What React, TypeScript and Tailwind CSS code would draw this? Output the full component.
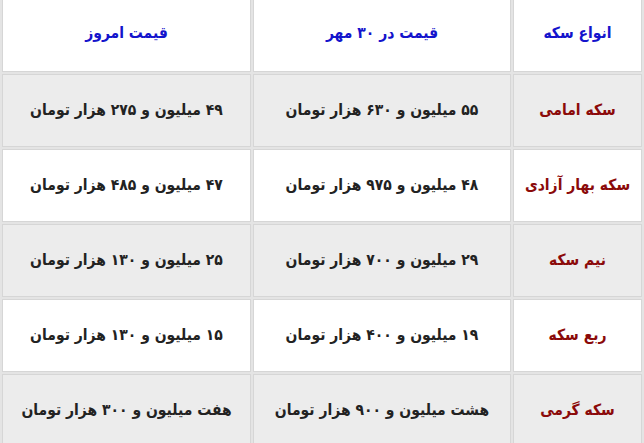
import React from "react";

const rows = [
  { name: "سکه امامی", before: "۵۵ میلیون و ۶۳۰ هزار تومان", today: "۴۹ میلیون و ۲۷۵ هزار تومان" },
  { name: "سکه بهار آزادی", before: "۴۸ میلیون و ۹۷۵ هزار تومان", today: "۴۷ میلیون و ۴۸۵ هزار تومان" },
  { name: "نیم سکه", before: "۲۹ میلیون و ۷۰۰ هزار تومان", today: "۲۵ میلیون و ۱۳۰ هزار تومان" },
  { name: "ربع سکه", before: "۱۹ میلیون و ۴۰۰ هزار تومان", today: "۱۵ میلیون و ۱۳۰ هزار تومان" },
  { name: "سکه گرمی", before: "هشت میلیون و ۹۰۰ هزار تومان", today: "هفت میلیون و ۳۰۰ هزار تومان" },
];

export default function App() {
  return (
    <div
      dir="rtl"
      className="w-[644px] h-[443px] overflow-hidden bg-[#e4e4e4] px-[2px]"
      style={{ fontFamily: '"DejaVu Sans Condensed", "DejaVu Sans", Tahoma, sans-serif' }}
    >
      <div className="grid grid-cols-[129px_258px_249px] gap-[2px] font-bold text-[15.5px]">
        {/* header */}
        <div className="h-[72px] pb-[4px] flex items-center justify-center bg-white border border-t-0 border-[#d6d6d6] text-[#1414cc]">
          انواع سکه
        </div>
        <div className="h-[72px] pb-[4px] flex items-center justify-center bg-white border border-t-0 border-[#d6d6d6] text-[#1414cc]">
          قیمت در ۳۰ مهر
        </div>
        <div className="h-[72px] pb-[4px] flex items-center justify-center bg-white border border-t-0 border-[#d6d6d6] text-[#1414cc]">
          قیمت امروز
        </div>

        {rows.map((r, i) => {
          const bg = i % 2 === 0 ? "bg-[#ececec]" : "bg-white";
          return (
            <React.Fragment key={i}>
              <div className={`h-[73px] flex items-center justify-center border border-[#d6d6d6] text-[#8b0a0a] ${bg}`}>
                {r.name}
              </div>
              <div className={`h-[73px] flex items-center justify-center border border-[#d6d6d6] text-[#222222] ${bg}`}>
                {r.before}
              </div>
              <div className={`h-[73px] flex items-center justify-center border border-[#d6d6d6] text-[#222222] ${bg}`}>
                {r.today}
              </div>
            </React.Fragment>
          );
        })}
      </div>
    </div>
  );
}
